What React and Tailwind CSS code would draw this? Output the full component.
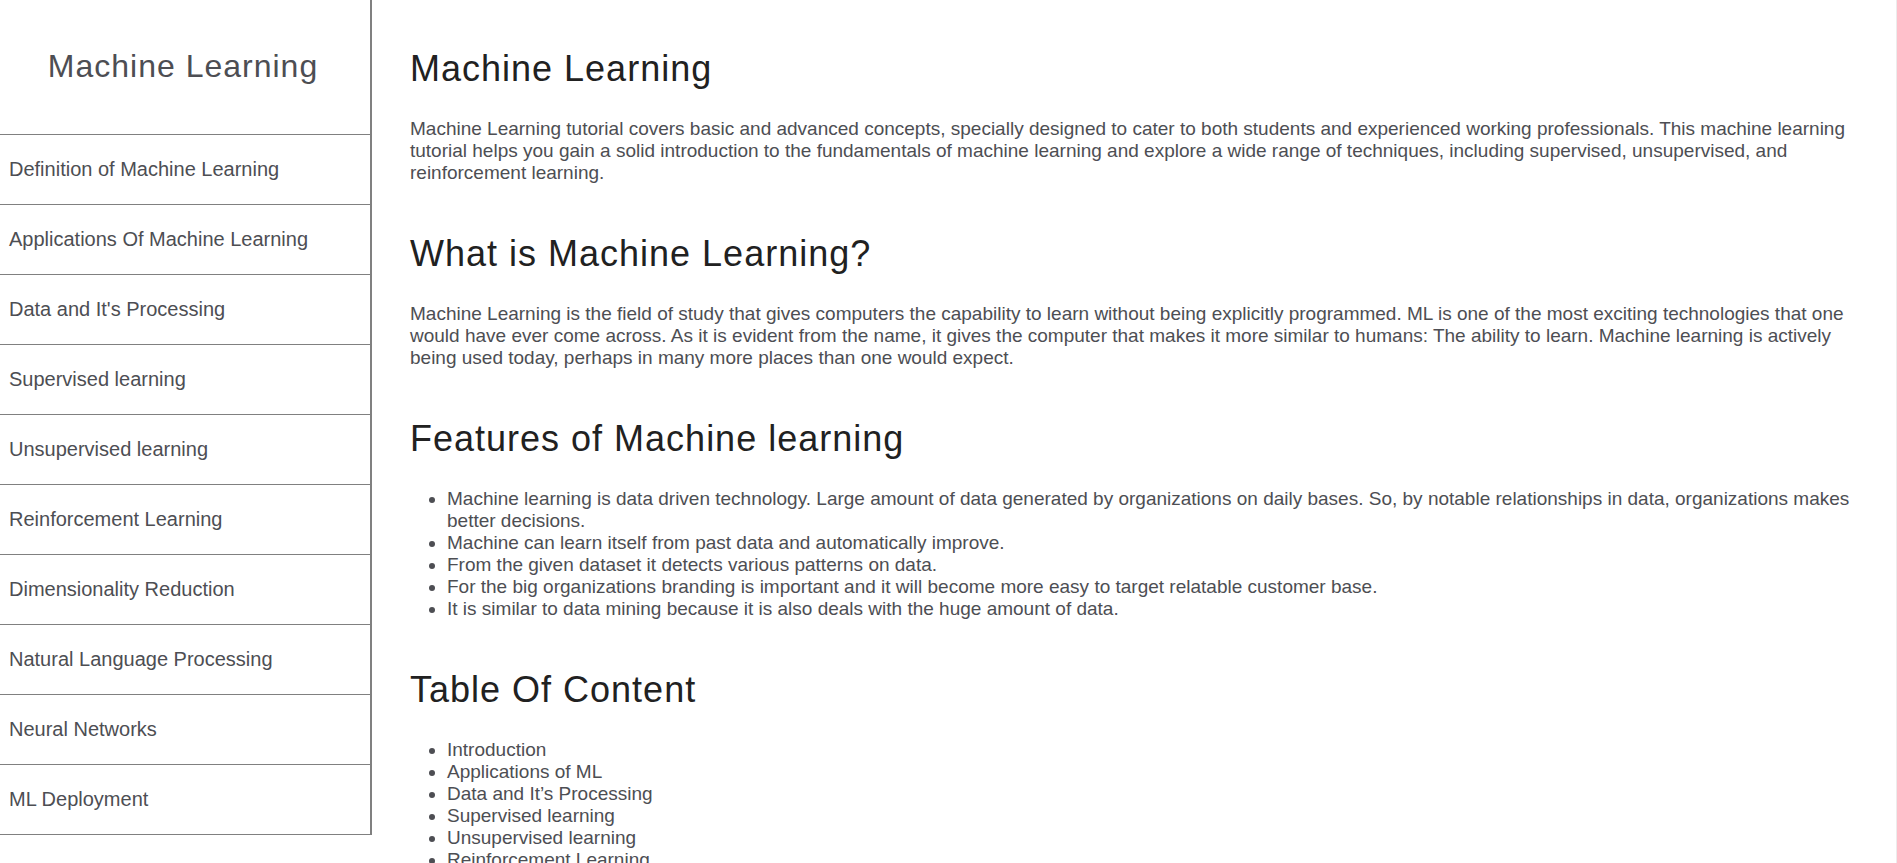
const links = [
  "Definition of Machine Learning",
  "Applications Of Machine Learning",
  "Data and It's Processing",
  "Supervised learning",
  "Unsupervised learning",
  "Reinforcement Learning",
  "Dimensionality Reduction",
  "Natural Language Processing",
  "Neural Networks",
  "ML Deployment",
];

const features = [
  "Machine learning is data driven technology. Large amount of data generated by organizations on daily bases. So, by notable relationships in data, organizations makes better decisions.",
  "Machine can learn itself from past data and automatically improve.",
  "From the given dataset it detects various patterns on data.",
  "For the big organizations branding is important and it will become more easy to target relatable customer base.",
  "It is similar to data mining because it is also deals with the huge amount of data.",
];

const contents = [
  "Introduction",
  "Applications of ML",
  "Data and It’s Processing",
  "Supervised learning",
  "Unsupervised learning",
  "Reinforcement Learning",
];

function Section({ title, children }) {
  return (
    <section>
      <h2 className="text-4xl tracking-[1px] leading-[42px] text-[#212121]">{title}</h2>
      <div className="mt-7 text-[19px] leading-[22px] text-[#4d4e53]">{children}</div>
    </section>
  );
}

function Bullets({ items }) {
  return (
    <ul className="list-disc pl-[37px]">
      {items.map((item) => (
        <li key={item}>{item}</li>
      ))}
    </ul>
  );
}

export default function App() {
  return (
    <div className="flex h-screen items-start overflow-hidden border-r border-[#ececec] bg-white font-['Liberation_Sans',Arial,sans-serif]">
      <nav className="w-[372px] shrink-0 border-r-2 border-[#808080] text-[#4d4e53]">
        <h1 className="pt-12 pr-1 pb-[50px] text-center text-[32px] leading-[36px] tracking-[1px]">
          Machine Learning
        </h1>
        <ul>
          {links.map((link) => (
            <li key={link} className="border-t border-[#808080] last:border-b">
              <a href="#" className="block px-[9px] py-[23px] text-xl leading-[23px]">
                {link}
              </a>
            </li>
          ))}
        </ul>
      </nav>
      <main className="flex min-w-0 flex-1 flex-col gap-[49px] pt-12 pr-7 pl-[38px]">
        <Section title="Machine Learning">
          <p>
            Machine Learning tutorial covers basic and advanced concepts, specially designed to cater to both students and experienced working professionals. This machine learning tutorial helps you gain a solid introduction to the fundamentals of machine learning and explore a wide range of techniques, including supervised, unsupervised, and reinforcement learning.
          </p>
        </Section>
        <Section title="What is Machine Learning?">
          <p>
            Machine Learning is the field of study that gives computers the capability to learn without being explicitly programmed. ML is one of the most exciting technologies that one would have ever come across. As it is evident from the name, it gives the computer that makes it more similar to humans: The ability to learn. Machine learning is actively being used today, perhaps in many more places than one would expect.
          </p>
        </Section>
        <Section title="Features of Machine learning">
          <Bullets items={features} />
        </Section>
        <Section title="Table Of Content">
          <Bullets items={contents} />
        </Section>
      </main>
    </div>
  );
}
